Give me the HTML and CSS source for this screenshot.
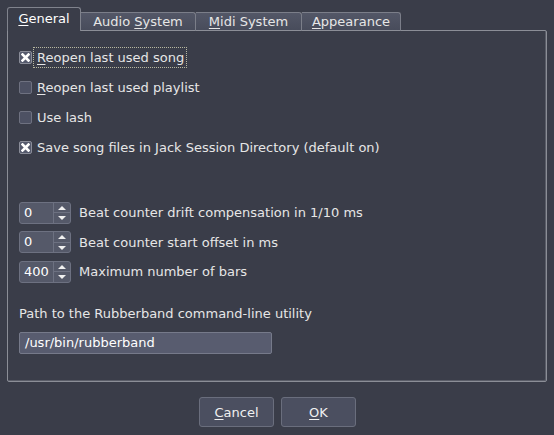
FILE: index.html
```html
<!DOCTYPE html>
<html>
<head>
<meta charset="utf-8">
<link rel="stylesheet" href="styles.css">
</head>
<body>
<div class="dialog">
  <div class="tabbar">
    <div class="tab selected"><span><span class="u">G</span>eneral</span></div>
    <div class="tab"><span>Audio <span class="u">S</span>ystem</span></div>
    <div class="tab"><span><span class="u">M</span>idi System</span></div>
    <div class="tab"><span><span class="u">A</span>ppearance</span></div>
  </div>
  <div class="panel">
    <div class="checks">
      <div class="row">
        <span class="cb checked"><svg width="9" height="9" viewBox="0 0 9 9"><path d="M1.5 1.5 L7.5 7.5 M7.5 1.5 L1.5 7.5" stroke="#ffffff" stroke-width="2.6" stroke-linecap="square"/></svg></span>
        <span class="lbl focus"><span class="u">R</span>eopen last used song</span>
      </div>
      <div class="row">
        <span class="cb"></span>
        <span class="lbl"><span class="u">R</span>eopen last used playlist</span>
      </div>
      <div class="row">
        <span class="cb"></span>
        <span class="lbl">Use lash</span>
      </div>
      <div class="row">
        <span class="cb checked"><svg width="9" height="9" viewBox="0 0 9 9"><path d="M1.5 1.5 L7.5 7.5 M7.5 1.5 L1.5 7.5" stroke="#ffffff" stroke-width="2.6" stroke-linecap="square"/></svg></span>
        <span class="lbl">Save song files in Jack Session Directory (default on)</span>
      </div>
    </div>
    <div class="spins">
      <div class="srow">
        <div class="spin"><span class="val">0</span><span class="btns"><span class="up"></span><span class="down"></span></span></div>
        <span class="lbl">Beat counter drift compensation in 1/10 ms</span>
      </div>
      <div class="srow">
        <div class="spin"><span class="val">0</span><span class="btns"><span class="up"></span><span class="down"></span></span></div>
        <span class="lbl">Beat counter start offset in ms</span>
      </div>
      <div class="srow">
        <div class="spin"><span class="val">400</span><span class="btns"><span class="up"></span><span class="down"></span></span></div>
        <span class="lbl">Maximum number of bars</span>
      </div>
    </div>
    <div class="pathlbl">Path to the Rubberband command-line utility</div>
    <div class="edit">/usr/bin/rubberband</div>
  </div>
  <div class="buttons">
    <div class="btn"><span><span class="u">C</span>ancel</span></div>
    <div class="btn"><span><span class="u">O</span>K</span></div>
  </div>
</div>
</body>
</html>
```
FILE: styles.css
```css
html, body {
  margin: 0;
  padding: 0;
  background: #3a3d49;
  width: 554px;
  height: 435px;
  overflow: hidden;
}
body {
  font-family: "DejaVu Sans", sans-serif;
  font-size: 12px;
  color: #e6e6e6;
}
.u { text-decoration: underline; text-underline-offset: 2px; }
.dialog {
  padding: 7px 7px 0 7px;
}
.tabbar {
  display: flex;
  align-items: flex-end;
  height: 24px;
  position: relative;
  z-index: 1;
  margin-bottom: -1px;
}
.tab {
  height: 19px;
  box-sizing: border-box;
  display: flex;
  align-items: center;
  justify-content: center;
  border: 1px solid #7b7e89;
  border-bottom: 1px solid #8b8e97;
  border-left: none;
  border-radius: 0 3px 0 0;
  background: linear-gradient(#535767, #484c5b);
  color: #e6e6e6;
  font-size: 13px;
  white-space: nowrap;
}
.tab.selected {
  width: 74px;
  height: 24px;
  border: 1px solid #80838d;
  border-bottom: none;
  border-radius: 3px 3px 0 0;
  background: #3a3d49;
  padding: 0 0 2px 0;
  color: #ffffff;
}
.tab:nth-child(2) { width: 115px; }
.tab:nth-child(3) { width: 106px; }
.tab:nth-child(4) { width: 99px; }
.panel {
  width: 540px;
  height: 352px;
  box-sizing: border-box;
  border: 1px solid #8b8e97;
  border-radius: 0 2px 2px 2px;
  box-shadow: inset -1px -1px 0 #5a5d68;
  padding: 11px 0 0 11px;
}
.checks { display: flex; flex-direction: column; }
.row {
  height: 30px;
  display: flex;
  align-items: center;
}
.cb {
  width: 13px;
  height: 13px;
  box-sizing: border-box;
  border: 1px solid #6e7180;
  background: #4d5163;
  border-radius: 2px;
  display: flex;
  align-items: center;
  justify-content: center;
  margin-right: 5px;
}
.cb.checked { background: #555a6d; border-color: #8a8d99; }
.lbl { font-size: 13px; white-space: nowrap; }
.focus {
  outline: 1px dotted #b8b8a0;
  outline-offset: 2px;
  padding: 0 0 0 1px;
  margin-left: -1px;
}
.spins {
  margin-top: 36px;
  display: flex;
  flex-direction: column;
}
.srow {
  height: 29.5px;
  display: flex;
  align-items: center;
}
.spin {
  width: 52px;
  height: 22px;
  box-sizing: border-box;
  border: 1px solid #6d7181;
  border-radius: 3px;
  background: #555969;
  display: flex;
  margin-right: 8px;
}
.val {
  flex: 1;
  padding-left: 4px;
  font-size: 13px;
  line-height: 20px;
  color: #ffffff;
}
.btns {
  width: 16px;
  border-left: 1px solid #6d7181;
  display: flex;
  flex-direction: column;
}
.btns span {
  flex: 1;
  display: flex;
  align-items: center;
  justify-content: center;
}
.btns .up { border-bottom: 1px solid #6d7181; }
.btns .up::after {
  content: "";
  border-left: 4px solid transparent;
  border-right: 4px solid transparent;
  border-bottom: 4px solid #f0f0f0;
}
.btns .down::after {
  content: "";
  border-left: 4px solid transparent;
  border-right: 4px solid transparent;
  border-top: 4px solid #f0f0f0;
}
.pathlbl {
  font-size: 13px;
  margin-top: 17px;
  height: 20px;
  line-height: 20px;
}
.edit {
  margin-top: 8px;
  width: 253px;
  height: 22px;
  box-sizing: border-box;
  border: 1px solid #767a8a;
  border-radius: 2px;
  background: #585c6f;
  font-size: 13px;
  line-height: 20px;
  padding-left: 5px;
  color: #ffffff;
}
.buttons {
  display: flex;
  justify-content: center;
  gap: 7px;
  margin-top: 15px;
  padding-left: 1px;
}
.btn {
  width: 75px;
  height: 30px;
  box-sizing: border-box;
  border: 1px solid #6a6e7d;
  border-radius: 3px;
  background: #4b4f60;
  display: flex;
  align-items: center;
  justify-content: center;
  font-size: 13px;
  color: #f0f0f0;
}
```
